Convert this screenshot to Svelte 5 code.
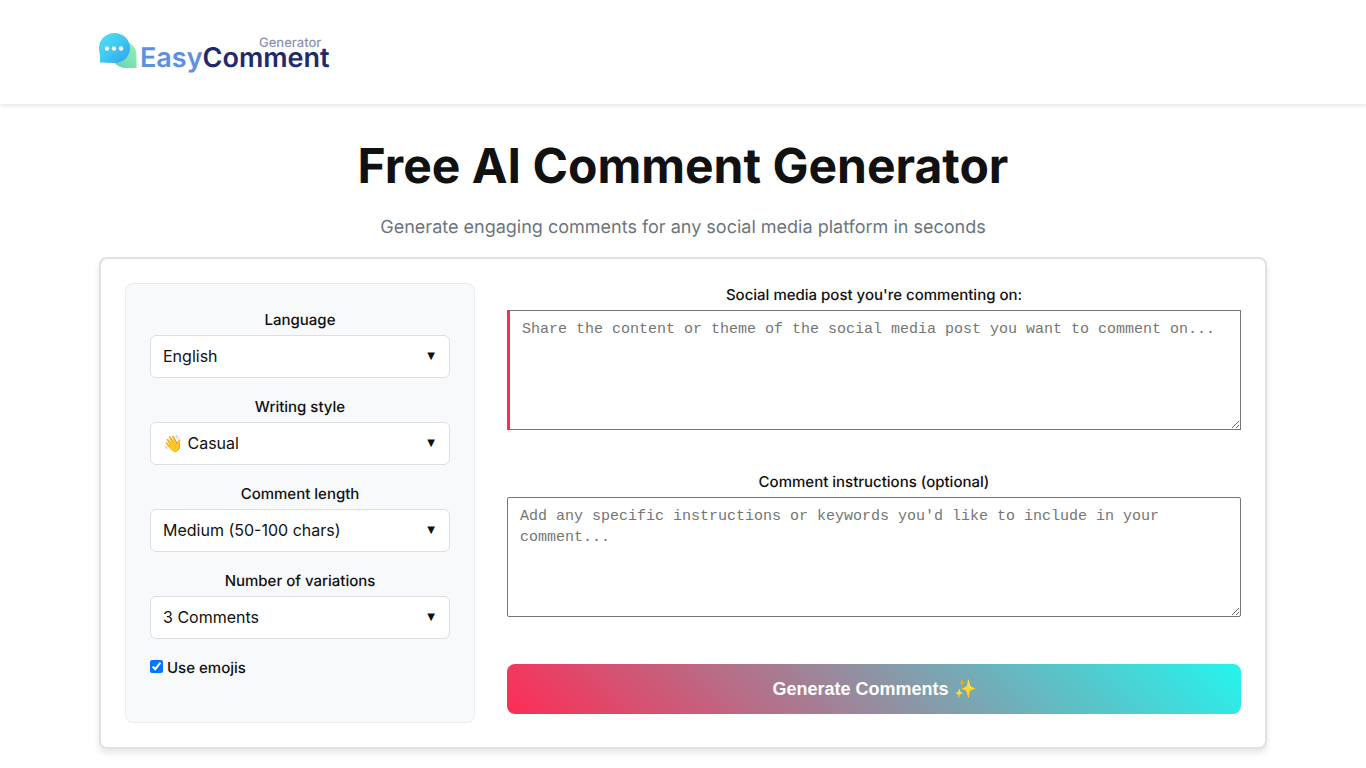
<script>
  const fields = [
    { id: 'language', label: 'Language', options: ['English', 'Spanish', 'French', 'German'], value: 'English' },
    { id: 'style', label: 'Writing style', options: ['👋 Casual', '💼 Professional', '😄 Funny'], value: '👋 Casual' },
    {
      id: 'length',
      label: 'Comment length',
      options: ['Short (20-50 chars)', 'Medium (50-100 chars)', 'Long (100-200 chars)'],
      value: 'Medium (50-100 chars)'
    },
    { id: 'variations', label: 'Number of variations', options: ['1 Comment', '3 Comments', '5 Comments'], value: '3 Comments' }
  ];

  let values = $state(Object.fromEntries(fields.map((f) => [f.id, f.value])));
  let useEmojis = $state(true);
  let post = $state('');
  let instructions = $state('');
</script>

<header class="site-header">
  <div class="container">
    <a class="logo" href="/" aria-label="EasyComment Generator">
      <svg width="232" height="44" viewBox="0 0 232 44" aria-hidden="true">
        <defs>
          <linearGradient id="bubble" x1="0" y1="0" x2="1" y2="1">
            <stop offset="0" stop-color="#4fe3f3" />
            <stop offset="0.5" stop-color="#3fc8f4" />
            <stop offset="1" stop-color="#2f9df0" />
          </linearGradient>
          <linearGradient id="reply" x1="0" y1="1" x2="1" y2="0">
            <stop offset="0" stop-color="#5fd3b0" />
            <stop offset="1" stop-color="#9af0b4" />
          </linearGradient>
          <linearGradient id="easy" x1="0" y1="0" x2="1" y2="0">
            <stop offset="0" stop-color="#5b8fe0" />
            <stop offset="1" stop-color="#6a90e0" />
          </linearGradient>
        </defs>
        <path d="M27 14C33 15 37.500 20 37.500 27V40H27C22 40 18 38 15 34Z" fill="url(#reply)" />
        <path d="M15.500 5C24 5 31 11.500 31 20C31 28.500 24 35 15.500 35L1 34.500V27C0.500 25 0 22.500 0 20C0 11.500 7 5 15.500 5Z" fill="url(#bubble)" />
        <circle cx="8" cy="20.500" r="2.200" fill="#fff" />
        <circle cx="15" cy="20.500" r="2.200" fill="#fff" />
        <circle cx="22" cy="20.500" r="2.200" fill="#fff" />
        <text class="word" x="41" y="39"><tspan fill="url(#easy)">Easy</tspan><tspan fill="#1f2a6b">Comment</tspan></text>
        <text class="tag" x="160" y="19">Generator</text>
      </svg>
    </a>
  </div>
</header>

<main class="container">
  <h1>Free AI Comment Generator</h1>
  <p class="subtitle">Generate engaging comments for any social media platform in seconds</p>

  <form class="card" onsubmit={(e) => e.preventDefault()}>
    <section class="options">
      {#each fields as field}
        <div class="field">
          <label for={field.id}>{field.label}</label>
          <div class="select">
            <select id={field.id} bind:value={values[field.id]}>
              {#each field.options as option}
                <option value={option}>{option}</option>
              {/each}
            </select>
          </div>
        </div>
      {/each}
      <label class="check">
        <input type="checkbox" bind:checked={useEmojis} />
        <span>Use emojis</span>
      </label>
    </section>

    <section class="content">
      <div class="field">
        <label for="post">Social media post you're commenting on:</label>
        <textarea
          id="post"
          class="required"
          bind:value={post}
          placeholder="Share the content or theme of the social media post you want to comment on..."
        ></textarea>
      </div>
      <div class="field">
        <label for="instructions">Comment instructions (optional)</label>
        <textarea
          id="instructions"
          bind:value={instructions}
          placeholder="Add any specific instructions or keywords you'd like to include in your comment..."
        ></textarea>
      </div>
      <button type="submit">Generate Comments ✨</button>
    </section>
  </form>
</main>

<style>
  :global(body) {
    background: #fff;
    color: #111;
    font-family: Inter, sans-serif;
    font-size: 16px;
    line-height: 24px;
    text-rendering: geometricPrecision;
  }

  .container {
    box-sizing: border-box;
    max-width: 1200px;
    margin: 0 auto;
    padding: 0 16px;
  }

  .site-header {
    padding: 28px 0 32px;
    box-shadow: 0 2px 4px rgba(0, 0, 0, 0.1);
  }

  .logo {
    display: flex;
    width: fit-content;
  }

  .logo svg {
    display: block;
    overflow: visible;
  }

  .word {
    font: 600 27px Inter, sans-serif;
  }

  .tag {
    font: 500 13px Inter, sans-serif;
    fill: #8d92b5;
  }

  h1 {
    margin: 32px 0 18px;
    font-size: 48px;
    font-weight: 700;
    line-height: 60px;
    text-align: center;
  }

  .subtitle {
    margin: 0 0 15px;
    color: #6c757d;
    font-size: 18px;
    line-height: 28px;
    text-align: center;
  }

  .card {
    display: grid;
    grid-template-columns: 350px minmax(0, 1fr);
    gap: 32px;
    padding: 24px;
    margin-bottom: 16px;
    border: 2px solid #dee2e6;
    border-radius: 8px;
    background: #fff;
    box-shadow: 0 4px 6px rgba(0, 0, 0, 0.1);
  }

  .options {
    box-sizing: border-box;
    display: flex;
    flex-direction: column;
    gap: 17px;
    padding: 24px 24px 40px;
    border: 1px solid #e9ecef;
    border-radius: 8px;
    background: #f8f9fb;
  }

  .content {
    display: flex;
    flex-direction: column;
    gap: 40px;
    padding-bottom: 9px;
  }

  .field {
    display: flex;
    flex-direction: column;
    gap: 3px;
  }

  label {
    font-size: 15px;
    font-weight: 500;
    text-align: center;
  }

  .select {
    position: relative;
  }

  .select::after {
    content: '▼';
    position: absolute;
    top: 0;
    right: 15px;
    font-family: 'DejaVu Sans', sans-serif;
    font-size: 10px;
    line-height: 43px;
    pointer-events: none;
  }

  select {
    display: block;
    width: 100%;
    height: 43px;
    padding: 0 36px 2px 12px;
    border: 1px solid #dcdfe3;
    border-radius: 6px;
    appearance: none;
    background: #fff;
    color: #111;
    font: 16px Inter, sans-serif;
  }

  .check {
    display: flex;
    align-items: baseline;
    gap: 4px;
  }

  .check input {
    width: 13px;
    height: 13px;
    margin: 0;
  }

  textarea {
    box-sizing: border-box;
    display: block;
    width: 100%;
    height: 120px;
    padding: 8px 12px;
    border: 1px solid #767676;
    border-radius: 2px;
    background: #fff;
    color: #111;
    font: 15px/21px 'Liberation Mono', monospace;
    resize: vertical;
  }

  textarea.required {
    border-left: 3px solid #fe2c55;
    border-radius: 0;
  }

  textarea::placeholder {
    color: #757575;
  }

  button {
    height: 50px;
    margin-top: 7px;
    border: 0;
    border-radius: 8px;
    background: linear-gradient(45deg, #fe2c55, #25f4ee);
    color: #fff;
    font: 700 18px 'Liberation Sans', sans-serif;
    cursor: pointer;
  }

  @media (max-width: 800px) {
    .card {
      grid-template-columns: minmax(0, 1fr);
    }
  }
</style>
